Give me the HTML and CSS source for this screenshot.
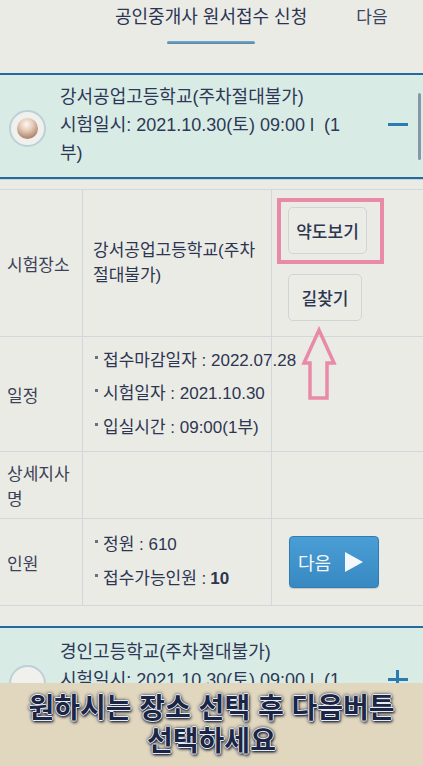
FILE: index.html
```html
<!DOCTYPE html>
<html lang="ko">
<head>
<meta charset="utf-8">
<title>공인중개사 원서접수 신청</title>
<link rel="stylesheet" href="styles.css">
</head>
<body>
<div class="screen">
  <header class="topbar">
    <nav class="tabs">
      <div class="tab active"><span class="tab-label">공인중개사 원서접수 신청</span><span class="tab-bar"></span></div>
      <div class="tab"><span class="tab-label">다음</span></div>
    </nav>
  </header>

  <section class="item">
    <div class="item-head">
      <span class="radio"><span class="ball"></span></span>
      <div class="item-text">강서공업고등학교(주차절대불가)<br>시험일시: 2021.10.30(토) 09:00 l &nbsp;(1<br>부)</div>
      <span class="toggle minus"></span>
    </div>
    <span class="scroll-ind"></span>
  </section>

  <div class="detail">
    <div class="table">
      <div class="cell label">시험장소</div>
      <div class="cell value">강서공업고등학교(주차<br>절대불가)</div>
      <div class="cell action stack">
        <div class="annot-box"><button class="btn">약도보기</button></div>
        <button class="btn btn-route">길찾기</button>
      </div>

      <div class="cell label">일정</div>
      <div class="cell value">
        <ul class="bullets">
          <li>접수마감일자 : 2022.07.28</li>
          <li>시험일자 : 2021.10.30</li>
          <li>입실시간 : 09:00(1부)</li>
        </ul>
      </div>
      <div class="cell action"></div>

      <div class="cell label two">상세지사<br>명</div>
      <div class="cell value"></div>
      <div class="cell action"></div>

      <div class="cell label">인원</div>
      <div class="cell value">
        <ul class="bullets wide">
          <li>정원 : 610</li>
          <li>접수가능인원 : <b>10</b></li>
        </ul>
      </div>
      <div class="cell action center">
        <button class="btn-next">다음 <svg class="tri" width="20" height="22" viewBox="0 0 20 22"><polygon points="1,1 19,11 1,21" fill="#f3f8fc"/></svg></button>
      </div>
    </div>
  </div>

  <section class="item item2">
    <div class="item-head">
      <span class="radio"></span>
      <div class="item-text">경인고등학교(주차절대불가)<br>시험일시: 2021.10.30(토) 09:00 l &nbsp;(1<br>부)</div>
      <span class="toggle plus"></span>
    </div>
  </section>

  <svg class="annot-arrow" width="40" height="76" viewBox="0 0 40 76">
    <polygon points="19,4 34,37 27,37 27,72 10,72 10,37 4,37" fill="none" stroke="#e98aa9" stroke-width="3.5" stroke-linejoin="miter"/>
  </svg>

  <div class="caption">
    <p class="cap-line">원하시는 장소 선택 후 다음버튼</p>
    <p class="cap-line">선택하세요</p>
  </div>
</div>
</body>
</html>
```
FILE: styles.css
```css
* { box-sizing: border-box; }
html, body { margin: 0; padding: 0; }
body {
  width: 423px;
  height: 766px;
  overflow: hidden;
  background: #ebebe6;
  font-family: "Liberation Sans", "Noto Sans CJK KR", sans-serif;
  color: #2d3651;
}
.screen {
  position: relative;
  width: 423px;
  height: 766px;
  overflow: hidden;
  background: #ebebe6;
}

/* top tabs */
.topbar { height: 73px; background: #ebebe6; }
.tabs { display: flex; padding-left: 115px; gap: 49px; }
.tab { display: flex; flex-direction: column; align-items: center; }
.tab-label {
  font-family: "Noto Sans CJK KR", sans-serif;
  font-size: 18px;
  line-height: 31px;
  color: #2b3553;
  white-space: nowrap;
}
.tab:not(.active) .tab-label { color: #3b4560; font-size: 17px; }
.tab-bar {
  margin-top: 10px;
  width: 88px;
  height: 3px;
  border-radius: 2px;
  background: linear-gradient(#7fa9c6, #4f86ad);
}

/* accordion items */
.item {
  position: relative;
  background: #d9ebe5;
  border-top: 2px solid #236b9d;
  border-bottom: 2px solid #236b9d;
}
.item-head {
  display: flex;
  align-items: center;
  padding: 8px 15px 10px 9px;
}
.radio {
  flex: none;
  width: 37px;
  height: 37px;
  border-radius: 50%;
  border: 2px solid #bdd0d8;
  background: #f0f0ec;
  display: flex;
  align-items: center;
  justify-content: center;
  margin-right: 14px;
  margin-top: 6px;
}
.ball {
  width: 21px;
  height: 21px;
  border-radius: 50%;
  background: radial-gradient(circle at 45% 30%, #fdf8f2 0%, #e6cbb8 35%, #b58d77 70%, #8f6a57 100%);
}
.item-text {
  flex: 1;
  font-size: 18px;
  line-height: 28px;
  color: #2d3856;
  white-space: nowrap;
}
.toggle { flex: none; position: relative; width: 20px; height: 20px; }
.toggle::before, .plus::after {
  content: "";
  position: absolute;
  left: 0; top: 8px;
  width: 20px; height: 3px;
  background: #2a7bb2;
}
.plus::after { left: 8px; top: 0; width: 3px; height: 20px; }
.scroll-ind {
  position: absolute;
  right: 2px; top: 18px;
  width: 3px; height: 67px;
  border-radius: 2px;
  background: #8797a8;
}

/* detail */
.detail {
  border-top: 1px solid #c4d3de;
  padding: 9px 0 20px;
  background: #ebebe6;
}
.table {
  display: grid;
  grid-template-columns: 83px 189px 1fr;
  grid-template-rows: 147px 115px 67px 87px;
  border-top: 1px solid #d2d8da;
}
.cell {
  border-bottom: 1px solid #d2d8da;
  font-family: "Liberation Sans", "Noto Sans CJK KR", sans-serif;
  font-size: 17px;
  line-height: 25px;
  color: #2d3651;
}
.label, .value { border-right: 1px solid #d2d8da; display: flex; align-items: center; }
.label { padding-left: 7px; color: #3b4257; font-family: "Noto Sans CJK KR", sans-serif; }
.value { padding-left: 10px; white-space: nowrap; }
.action { display: flex; }
.stack { flex-direction: column; align-items: flex-start; padding: 8px 0 0 5px; gap: 10px; }
.center { align-items: center; padding-left: 17px; }

.annot-box {
  border: 4px solid #e98aa9;
  padding: 5px 13px 6px 7px;
}
.btn {
  font-family: "Noto Sans CJK KR", sans-serif;
  font-size: 17px;
  font-weight: 500;
  color: #2d3651;
  background: #ecece7;
  border: 1px solid #cfd5d7;
  border-radius: 5px;
  width: 79px;
  height: 47px;
  padding: 0;
}
.btn-route { width: 74px; margin-left: 11px; }

.bullets { list-style: none; margin: 0; padding: 0 0 0 2px; overflow: visible; }
.bullets li { display: flex; align-items: center; line-height: 33.5px; white-space: nowrap; }
.bullets.wide li { line-height: 34px; }
.bullets li::before {
  content: "";
  flex: none;
  width: 3px; height: 3px;
  background: #6a7080;
  margin-right: 5px;
  margin-top: -7px;
}
.bullets b { font-weight: 700; margin-left: 4px; }

.btn-next {
  display: flex;
  align-items: center;
  gap: 13px;
  width: 90px;
  height: 52px;
  padding: 0 0 0 8px;
  border: 1px solid #2f7db5;
  border-radius: 4px;
  background: linear-gradient(#4a9dd5, #3889c2);
  color: #f3f8fc;
  font-family: "Noto Sans CJK KR", sans-serif;
  font-size: 18px;
  box-shadow: 0 1px 1px rgba(0,0,0,0.15);
}

.item2 .item-head { padding-top: 10px; }

/* annotation arrow */
.annot-arrow { position: absolute; left: 300px; top: 326px; }

/* subtitle caption */
.caption {
  position: absolute;
  left: 0; right: 0; bottom: 0;
  height: 83px;
  padding-top: 7px;
  background: #e1d7bf;
  text-align: center;
  font-family: "Noto Sans CJK KR", sans-serif;
  font-weight: 700;
  font-size: 28px;
  color: #1b2544;
  text-shadow:
    1px 0 0 #e8ecf2, -1px 0 0 #e8ecf2, 0 1px 0 #e8ecf2, 0 -1px 0 #e8ecf2,
    0 0 3px #0c1530, 0 0 4px #0c1530, 1px 2px 3px #0c1530;
}
.cap-line { margin: 0; line-height: 33px; white-space: nowrap; }
```
